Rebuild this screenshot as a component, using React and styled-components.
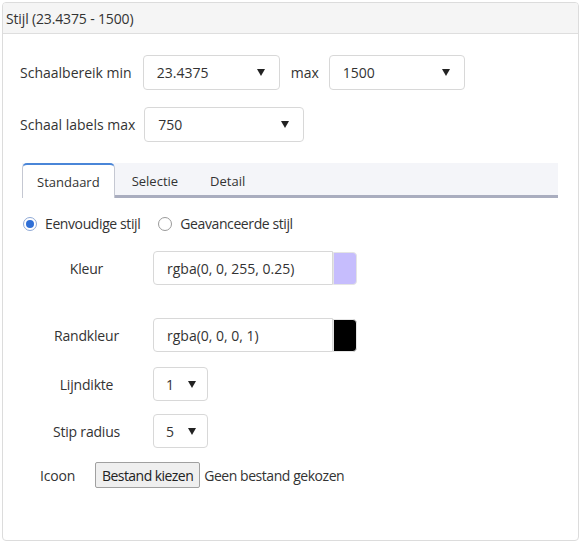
import React from "react";
import styled, { createGlobalStyle } from "styled-components";

const Global = createGlobalStyle`
  html, body { margin: 0; padding: 0; background: #fff; }
  body { font-family: "Open Sans", "Noto Sans", sans-serif; color: #333; }
  * { box-sizing: border-box; }
`;

const Panel = styled.div`
  margin: 2px 0 0 2px;
  width: 577px;
  height: 539px;
  border: 1px solid #dcdcdc;
  border-radius: 4px;
  display: flex;
  flex-direction: column;
  overflow: hidden;
`;

const Header = styled.div`
  height: 31px;
  background: #f5f5f5;
  border-bottom: 1px solid #dedede;
  padding: 0 0 0 3px;
  display: flex;
  align-items: center;
  font-size: 14px;
  color: #333;
  letter-spacing: -0.15px;
`;

const Body = styled.div`
  padding: 21px 19px 0 17px;
  display: flex;
  flex-direction: column;
`;

const Row = styled.div`
  display: flex;
  align-items: center;
  margin-bottom: ${(p) => p.$mb || 0}px;
`;

const Label = styled.span`
  font-size: 14px;
  color: #333;
  white-space: nowrap;
  margin-right: ${(p) => p.$mr || 10}px;
`;

const Select = styled.div`
  width: ${(p) => p.$w}px;
  height: ${(p) => p.$h || 35}px;
  border: 1px solid #d8d8d8;
  border-radius: 4px;
  background: #fff;
  display: flex;
  align-items: center;
  justify-content: space-between;
  padding: 0 ${(p) => p.$pr || 14}px 0 ${(p) => p.$pl || 13}px;
  margin-right: ${(p) => p.$mr || 0}px;
  font-size: 14px;
  color: #333;
`;

const Caret = styled.span`
  width: 0;
  height: 0;
  border-left: 4.5px solid transparent;
  border-right: 4.5px solid transparent;
  border-top: 7px solid #222;
`;

const Tabs = styled.div`
  margin-top: 21px;
  margin-left: 2px;
  width: 536px;
  height: 35px;
  background: #f4f5f9;
  display: flex;
  align-items: stretch;
  position: relative;
  &::after {
    content: "";
    position: absolute;
    left: 0;
    right: 0;
    bottom: 0;
    height: 3px;
    background: #a9adbf;
  }
`;

const Tab = styled.div`
  padding: ${(p) => (p.$active ? "0 14px" : "0 16px")};
  display: flex;
  align-items: center;
  font-size: 13px;
  color: #333;
  position: relative;
  z-index: 1;
  ${(p) =>
    p.$active &&
    `
    background: #fff;
    border: 1px solid #c5c8d2;
    border-top: 2px solid #4a86d8;
    border-bottom: none;
    border-radius: 5px 5px 0 0;
    margin-right: 1px;
  `}
`;

const RadioRow = styled.div`
  display: flex;
  align-items: center;
  margin: 16px 0 0 3px;
  font-size: 14px;
`;

const RadioItem = styled.label`
  display: flex;
  align-items: center;
  gap: 8px;
  margin-right: 18px;
  letter-spacing: -0.4px;
`;

const Radio = styled.span`
  width: 14px;
  height: 14px;
  border-radius: 50%;
  border: 1px solid ${(p) => (p.$checked ? "#8fa9d6" : "#9a9a9a")};
  background: #fff;
  display: flex;
  align-items: center;
  justify-content: center;
  &::after {
    content: "";
    width: 8px;
    height: 8px;
    border-radius: 50%;
    background: ${(p) => (p.$checked ? "#2f6fd6" : "transparent")};
  }
`;

const Form = styled.div`
  display: flex;
  flex-direction: column;
`;

const FieldRow = styled.div`
  display: flex;
  align-items: center;
  margin-top: ${(p) => p.$mt || 0}px;
`;

const FieldLabel = styled.span`
  width: 133px;
  text-align: center;
  font-size: 14px;
  color: #333;
  letter-spacing: -0.2px;
`;

const TextInput = styled.div`
  width: 180px;
  height: 34px;
  border: 1px solid #d8d8d8;
  border-radius: 4px 0 0 4px;
  padding: 0 13px;
  display: flex;
  align-items: center;
  font-size: 14px;
  color: #333;
`;

const Swatch = styled.div`
  width: 24px;
  height: 33px;
  border-radius: 0 4px 4px 0;
  border: 1px solid #e4e4e4;
  background: ${(p) => p.$color};
`;

const FileRow = styled.div`
  display: flex;
  align-items: center;
  margin-top: 14px;
  padding-left: 20px;
  font-size: 14px;
`;

const FileLabel = styled.span`
  width: 55px;
  letter-spacing: -0.2px;
`;

const FileButton = styled.button`
  height: 26px;
  padding: 0 6px;
  border: 1px solid #a0a0a0;
  border-radius: 2px;
  background: #efefef;
  font-family: inherit;
  font-size: 14px;
  color: #222;
  margin-right: 4px;
  letter-spacing: -0.55px;
`;

const FileText = styled.span`
  letter-spacing: -0.45px;
`;

export default function App() {
  return (
    <>
      <Global />
      <Panel>
        <Header>Stijl (23.4375 - 1500)</Header>
        <Body>
          <Row $mb={17}>
            <Label $mr={11}>Schaalbereik min</Label>
            <Select $w={137} $mr={11}>
              23.4375 <Caret />
            </Select>
            <Label>max</Label>
            <Select $w={136}>
              1500 <Caret />
            </Select>
          </Row>
          <Row>
            <Label $mr={9}>Schaal labels max</Label>
            <Select $w={160}>
              750 <Caret />
            </Select>
          </Row>
          <Tabs>
            <Tab $active>Standaard</Tab>
            <Tab>Selectie</Tab>
            <Tab>Detail</Tab>
          </Tabs>
          <RadioRow>
            <RadioItem>
              <Radio $checked /> Eenvoudige stijl
            </RadioItem>
            <RadioItem>
              <Radio /> Geavanceerde stijl
            </RadioItem>
          </RadioRow>
          <Form>
            <FieldRow $mt={18}>
              <FieldLabel>Kleur</FieldLabel>
              <TextInput>rgba(0, 0, 255, 0.25)</TextInput>
              <Swatch $color="#c6bdfd" />
            </FieldRow>
            <FieldRow $mt={33}>
              <FieldLabel>Randkleur</FieldLabel>
              <TextInput>rgba(0, 0, 0, 1)</TextInput>
              <Swatch $color="#000" />
            </FieldRow>
            <FieldRow $mt={15}>
              <FieldLabel>Lijndikte</FieldLabel>
              <Select $w={55} $h={34} $pl={12} $pr={11}>
                1 <Caret />
              </Select>
            </FieldRow>
            <FieldRow $mt={13}>
              <FieldLabel>Stip radius</FieldLabel>
              <Select $w={55} $h={34} $pl={12} $pr={11}>
                5 <Caret />
              </Select>
            </FieldRow>
          </Form>
          <FileRow>
            <FileLabel>Icoon</FileLabel>
            <FileButton>Bestand kiezen</FileButton>
            <FileText>Geen bestand gekozen</FileText>
          </FileRow>
        </Body>
      </Panel>
    </>
  );
}
